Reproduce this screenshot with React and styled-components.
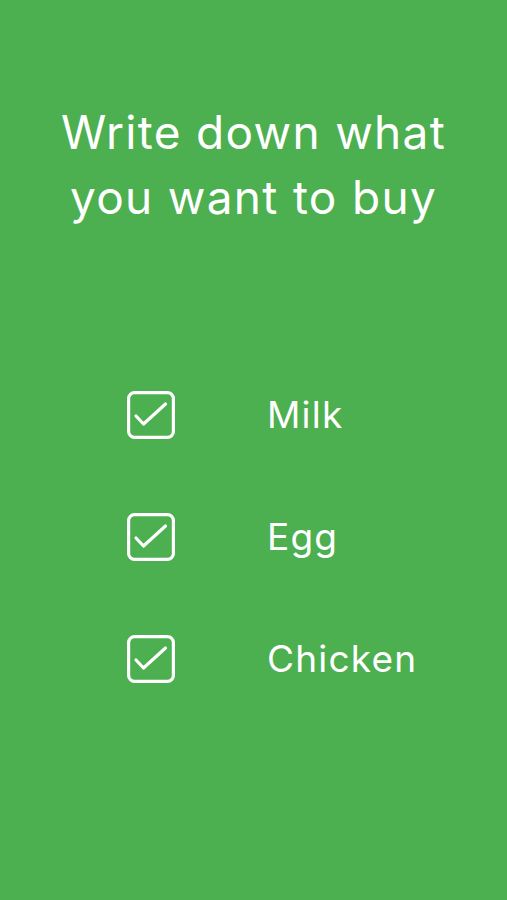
import React from "react";
import styled, { createGlobalStyle } from "styled-components";

const Global = createGlobalStyle`
  html, body { margin: 0; padding: 0; background: #4caf50; }
  body { font-family: Inter, "Noto Sans", sans-serif; }
`;

const Screen = styled.div`
  width: 507px;
  height: 900px;
  background: #4caf50;
  color: #ffffff;
  display: flex;
  flex-direction: column;
  box-sizing: border-box;
  padding-top: 100px;
`;

const Title = styled.h1`
  margin: 0;
  font-family: Inter, sans-serif;
  font-weight: 400;
  font-size: 46px;
  line-height: 65px;
  text-align: center;
  letter-spacing: 1.3px;
`;

const List = styled.ul`
  list-style: none;
  margin: 0;
  padding: 0 0 0 127px;
  margin-top: 161px;
  display: flex;
  flex-direction: column;
  gap: 74px;
`;

const Row = styled.li`
  display: flex;
  align-items: center;
  gap: 92px;
  height: 48px;
`;

const Label = styled.span`
  font-family: Inter, sans-serif;
  font-size: 37px;
  font-weight: 400;
  line-height: 48px;
  letter-spacing: 1.2px;
`;

const Box = styled.svg`
  flex: none;
  width: 48px;
  height: 48px;
`;

const CheckBox = () => (
  <Box viewBox="0 0 48 48" fill="none" stroke="#fff" strokeWidth="3.2" strokeLinecap="round" strokeLinejoin="round">
    <rect x="1.6" y="1.6" width="44.8" height="44.8" rx="6" />
    <path d="M9 25 L16.5 33 L38.5 13" />
  </Box>
);

const items = ["Milk", "Egg", "Chicken"];

export default function App() {
  return (
    <>
      <Global />
      <Screen>
        <Title>
          Write down what
          <br />
          you want to buy
        </Title>
        <List>
          {items.map((it) => (
            <Row key={it}>
              <CheckBox />
              <Label>{it}</Label>
            </Row>
          ))}
        </List>
      </Screen>
    </>
  );
}
